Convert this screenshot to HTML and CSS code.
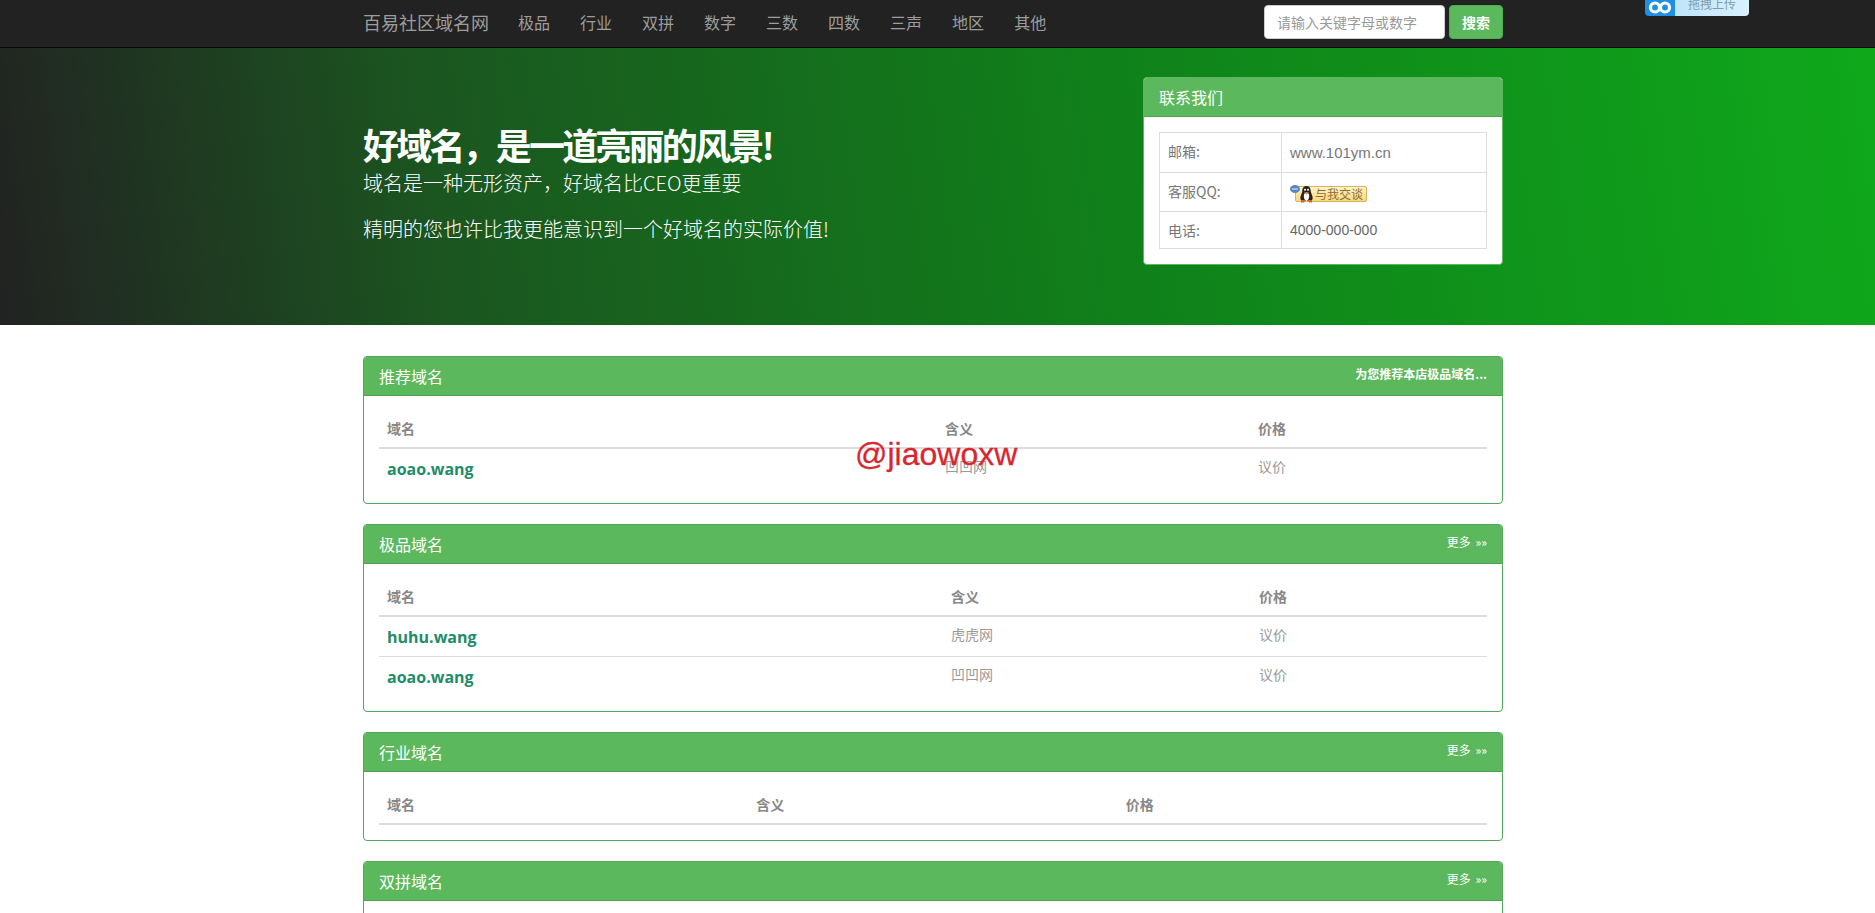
FILE: index.html
```html
<!DOCTYPE html>
<html lang="zh-CN">
  <head>
    <meta charset="utf-8" />
    <title>百易社区域名网</title>
    <link rel="stylesheet" href="styles.css">
  </head>

  <body>
    <nav class="navbar">
      <div class="container navbar__inner">
        <a class="navbar__brand" href="#">百易社区域名网</a>
        <ul class="navbar__menu">
          <li><a href="#">极品</a></li>
          <li><a href="#">行业</a></li>
          <li><a href="#">双拼</a></li>
          <li><a href="#">数字</a></li>
          <li><a href="#">三数</a></li>
          <li><a href="#">四数</a></li>
          <li><a href="#">三声</a></li>
          <li><a href="#">地区</a></li>
          <li><a href="#">其他</a></li>
        </ul>
        <form class="search">
          <input class="search__input" type="text" placeholder="请输入关键字母或数字" />
          <button class="search__btn" type="button">搜索</button>
        </form>
      </div>
    </nav>

    <!-- 拖拽上传 floats over the top of the window -->
    <div class="upload">
      <span class="upload__icon">
        <svg width="24" height="15" viewBox="0 0 24 15" fill="none" stroke="#fff" stroke-width="3.2">
          <circle cx="7" cy="7.500" r="4.500" />
          <circle cx="17" cy="7.500" r="4.500" />
        </svg>
      </span>
      <span class="upload__text">拖拽上传</span>
    </div>

    <header class="hero">
      <div class="container hero__inner">
        <div class="hero__text">
          <h1>好域名&#65292;是一道亮丽的风景!</h1>
          <p class="hero__sub">域名是一种无形资产&#65292;好域名比CEO更重要</p>
          <p class="hero__line">精明的您也许比我更能意识到一个好域名的实际价值!</p>
        </div>
        <div class="panel panel_contact">
          <div class="panel__head">
            <span class="panel__title">联系我们</span>
          </div>
          <div class="panel__body">
            <table class="contact">
              <tr>
                <td class="contact__label">邮箱:</td>
                <td class="contact__site">www.101ym.cn</td>
              </tr>
              <tr>
                <td class="contact__label">客服QQ:</td>
                <td>
                  <a class="qq" href="#">
                    <svg class="qq__icon" width="24" height="18" viewBox="0 0 24 18">
                      <ellipse cx="5" cy="4" rx="5" ry="4" fill="#5b84c4" />
                      <circle cx="3" cy="4" r="0.8" fill="#fff" />
                      <circle cx="5" cy="4" r="0.8" fill="#fff" />
                      <circle cx="7" cy="4" r="0.8" fill="#fff" />
                      <path d="M16.5 1c-3 0-4.2 2.4-4.2 5 0 2-2 4.500-2 7 0 2 1.500 3 3 3h6.400c1.500 0 3-1 3-3 0-2.500-2-5-2-7 0-2.600-1.200-5-4.200-5z" fill="#2a2320" />
                      <path d="M13.800 11c0-2 1.200-3.500 2.700-3.500s2.700 1.500 2.700 3.500-1.200 5-2.700 5-2.700-3-2.700-5z" fill="#fff" />
                      <path d="M14 7.500h5l-2.500 2z" fill="#e8941e" />
                      <circle cx="15" cy="4.800" r="1" fill="#fff" />
                      <circle cx="18" cy="4.800" r="1" fill="#fff" />
                      <path d="M11 15h4l-1 2.500h-3zM18 15h4l0 2.500h-3z" fill="#e8621e" />
                    </svg>
                    <span class="qq__text">与我交谈</span>
                  </a>
                </td>
              </tr>
              <tr>
                <td class="contact__label">电话:</td>
                <td class="contact__phone">4000-000-000</td>
              </tr>
            </table>
          </div>
        </div>
      </div>
    </header>

    <main class="container content">
      <div class="watermark">@jiaowoxw</div>

      <section class="panel">
        <div class="panel__head">
          <span class="panel__title">推荐域名</span>
          <a class="panel__more panel__more_bold" href="#">为您推荐本店极品域名...</a>
        </div>
        <div class="panel__body">
          <table class="domains domains_top">
            <thead>
              <tr><th>域名</th><th>含义</th><th>价格</th></tr>
            </thead>
            <tbody>
              <tr>
                <td><a class="domains__name" href="#">aoao.wang</a></td>
                <td>凹凹网</td>
                <td>议价</td>
              </tr>
            </tbody>
          </table>
        </div>
      </section>

      <section class="panel">
        <div class="panel__head">
          <span class="panel__title">极品域名</span>
          <a class="panel__more" href="#">更多 »»</a>
        </div>
        <div class="panel__body">
          <table class="domains domains_best">
            <thead>
              <tr><th>域名</th><th>含义</th><th>价格</th></tr>
            </thead>
            <tbody>
              <tr>
                <td><a class="domains__name" href="#">huhu.wang</a></td>
                <td>虎虎网</td>
                <td>议价</td>
              </tr>
              <tr>
                <td><a class="domains__name" href="#">aoao.wang</a></td>
                <td>凹凹网</td>
                <td>议价</td>
              </tr>
            </tbody>
          </table>
        </div>
      </section>

      <section class="panel">
        <div class="panel__head">
          <span class="panel__title">行业域名</span>
          <a class="panel__more" href="#">更多 »»</a>
        </div>
        <div class="panel__body">
          <table class="domains">
            <thead>
              <tr><th>域名</th><th>含义</th><th>价格</th></tr>
            </thead>
          </table>
        </div>
      </section>

      <section class="panel">
        <div class="panel__head">
          <span class="panel__title">双拼域名</span>
          <a class="panel__more" href="#">更多 »»</a>
        </div>
        <div class="panel__body">
          <table class="domains">
            <thead>
              <tr><th>域名</th><th>含义</th><th>价格</th></tr>
            </thead>
          </table>
        </div>
      </section>
    </main>
  </body>
</html>
```

FILE: styles.css
```css
html {
  overflow: hidden;
}

body {
  margin: 0;
  font-family: "Noto Sans CJK SC", "Liberation Sans", sans-serif;
  font-size: 14px;
  line-height: 20px;
  color: #777;
  background: #fff;
}

a {
  text-decoration: none;
}

.container {
  width: 1140px;
  margin-left: 363px;
}

/* navbar */
.navbar {
  background: #222;
  border-bottom: 1px solid #080808;
  padding: 5px 0 8px;
}

.navbar__inner {
  display: flex;
  align-items: center;
}

.navbar__brand {
  font-size: 18px;
  color: #9d9d9d;
  margin-right: 14px;
}

.navbar__menu {
  display: flex;
  flex: 1;
  list-style: none;
  margin: 0;
  padding: 0;
}

.navbar__menu a {
  display: block;
  padding: 0 15px;
  font-size: 16px;
  color: #9d9d9d;
}

.search {
  display: flex;
  gap: 4px;
}

.search__input {
  box-sizing: border-box;
  width: 181px;
  height: 34px;
  padding: 6px 12px;
  border: 1px solid #ccc;
  border-radius: 4px;
  font: inherit;
  color: #555;
}

.search__input::placeholder {
  color: #999;
}

.search__btn {
  box-sizing: border-box;
  width: 54px;
  height: 34px;
  padding: 0;
  border: 1px solid #4cae4c;
  border-radius: 4px;
  background: #5cb85c;
  color: #fff;
  font: inherit;
  font-weight: bold;
}

/* upload tab */
.upload {
  position: absolute;
  top: -14px;
  left: 1645px;
  display: flex;
  width: 104px;
  height: 30px;
  border-radius: 4px;
  overflow: hidden;
  font-size: 12px;
}

.upload__icon {
  display: flex;
  align-items: flex-end;
  justify-content: center;
  width: 30px;
  padding-bottom: 1px;
  box-sizing: border-box;
  background: #1e8fe6;
}

.upload__text {
  flex: 1;
  padding-top: 8px;
  text-align: center;
  color: #7f9fae;
  background: linear-gradient(90deg, #bfe4fb, #d9f1ff);
}

/* hero */
.hero {
  height: 277px;
  background: linear-gradient(82deg, #222 0%, #1b5620 24%, #107f1a 58%, #0fa81b 100%);
}

.hero__inner {
  display: flex;
  justify-content: space-between;
  padding-top: 29px;
}

.hero__text {
  padding-top: 47px;
  color: #fff;
}

.hero__text h1 {
  margin: 0;
  font-size: 36px;
  line-height: 40px;
  font-weight: bold;
  letter-spacing: -2.8px;
}

.hero__sub {
  margin: 5px 0 18px;
  font-size: 20px;
  line-height: 28px;
  font-weight: 300;
}

.hero__line {
  margin: 0;
  font-size: 20px;
  line-height: 28px;
  font-weight: 300;
}

/* panels */
.panel {
  margin-bottom: 20px;
  border: 1px solid #55a75c;
  border-radius: 4px;
  background: #fff;
}

.panel_contact {
  width: 360px;
  box-sizing: border-box;
  margin-bottom: 0;
  border-color: #5cb85c;
}

.panel__head {
  display: flex;
  justify-content: space-between;
  align-items: flex-start;
  padding: 10px 15px;
  border-bottom: 1px solid #4f9f55;
  border-radius: 3px 3px 0 0;
  background: #5cb85c;
}

.panel__title {
  font-size: 16px;
  line-height: 18px;
  color: #fff;
}

.panel__more {
  font-size: 12px;
  line-height: 14px;
  word-spacing: 2px;
  color: #fff;
}

.panel__more_bold {
  font-weight: bold;
}

.panel__body {
  padding: 15px;
}

/* contact table */
.contact {
  width: 100%;
  table-layout: fixed;
  border-collapse: collapse;
}

.contact td {
  padding: 8px;
  border: 1px solid #ddd;
  vertical-align: top;
  color: #666;
}

.contact td.contact__label {
  width: 105px;
  color: #777;
}

.contact td.contact__site {
  font-family: "Liberation Sans", sans-serif;
  font-size: 15px;
  line-height: 23px;
  color: #777;
}

.contact td.contact__phone {
  font-family: "Liberation Sans", sans-serif;
}

.qq {
  position: relative;
  display: block;
  width: 72px;
  height: 16px;
  margin: 5px 0 1px 5px;
  border: 1px solid #d8b25c;
  border-radius: 2px;
  box-sizing: border-box;
  background: linear-gradient(180deg, #fff4c8, #fcd878);
}

.qq__icon {
  position: absolute;
  top: -2px;
  left: -6px;
}

.qq__text {
  position: absolute;
  top: 0;
  right: 3px;
  font-size: 12px;
  line-height: 14px;
  color: #8a6d3b;
}

/* domain tables */
.domains {
  width: 100%;
  table-layout: fixed;
  border-collapse: collapse;
}

.domains th {
  padding: 7px 8px 9px;
  border-bottom: 2px solid #ddd;
  text-align: left;
  font-weight: bold;
  color: #888;
}

.domains td {
  padding: 7px 8px 9px;
  border-top: 1px solid #ddd;
  vertical-align: top;
  color: #999;
}

.domains td:first-child {
  padding: 9px 8px 7px;
}

.domains tbody tr:first-child td {
  border-top: 0;
}

.domains_top th:nth-child(1) {
  width: 542px;
}

.domains_top th:nth-child(2) {
  width: 297px;
}

.domains_best th:nth-child(1) {
  width: 548px;
}

.domains_best th:nth-child(2) {
  width: 292px;
}

.domains__name {
  font-family: "Open Sans", "Liberation Sans", sans-serif;
  font-size: 16px;
  line-height: 23px;
  font-weight: bold;
  color: #1f8c6a;
}

.content {
  position: relative;
  padding-top: 31px;
}

.watermark {
  position: absolute;
  top: 109px;
  left: 492px;
  font-family: "Liberation Sans", sans-serif;
  font-size: 32px;
  line-height: 40px;
  color: #d9262e;
  -webkit-text-stroke: 0.3px #d9262e;
}
```
